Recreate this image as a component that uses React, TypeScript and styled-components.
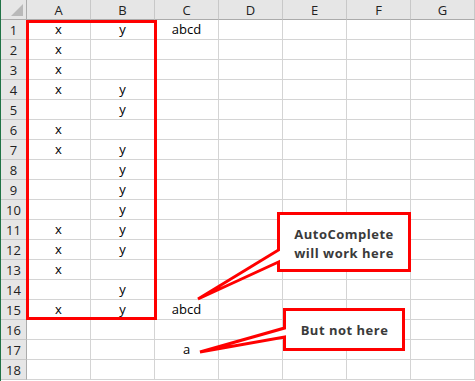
import React from "react";
import styled, { createGlobalStyle } from "styled-components";

const GlobalStyle = createGlobalStyle`
  html, body { margin: 0; padding: 0; background: #ffffff; }
  body { font-family: "Open Sans", "Liberation Sans", sans-serif; overflow: hidden; }
`;

const COLS = ["A", "B", "C", "D", "E", "F", "G"];
const ROW_COUNT = 18;

const cells: Record<string, string> = {
  A1: "x", B1: "y", C1: "abcd",
  A2: "x",
  A3: "x",
  A4: "x", B4: "y",
  B5: "y",
  A6: "x",
  A7: "x", B7: "y",
  B8: "y",
  B9: "y",
  B10: "y",
  A11: "x", B11: "y",
  A12: "x", B12: "y",
  A13: "x",
  B14: "y",
  A15: "x", B15: "y", C15: "abcd",
  C17: "a",
};

const Sheet = styled.div`
  position: relative;
  width: 475px;
  height: 381px;
  overflow: hidden;
  border-left: 1px solid #217346;
  box-sizing: border-box;
`;

const Grid = styled.div`
  display: grid;
  grid-template-columns: 26px repeat(7, 64px);
  grid-auto-rows: 20px;
`;

const Corner = styled.div`
  position: relative;
  background: #e6e6e6;
  border-right: 1px solid #ababab;
  border-bottom: 1px solid #ababab;
  box-sizing: border-box;
  &::after {
    content: "";
    position: absolute;
    right: 3px;
    bottom: 3px;
    width: 12px;
    height: 12px;
    background: #b9b9b9;
    clip-path: polygon(100% 0, 100% 100%, 0 100%);
  }
`;

const ColHead = styled.div`
  background: #e6e6e6;
  border-right: 1px solid #c8c8c8;
  border-bottom: 1px solid #ababab;
  box-sizing: border-box;
  display: flex;
  align-items: center;
  justify-content: center;
  font-size: 13px;
  color: #222222;
`;

const RowHead = styled.div`
  background: #e6e6e6;
  border-right: 1px solid #ababab;
  border-bottom: 1px solid #c8c8c8;
  box-sizing: border-box;
  display: flex;
  align-items: center;
  justify-content: center;
  font-size: 13px;
  color: #222222;
`;

const Cell = styled.div`
  border-right: 1px solid #d4d4d4;
  border-bottom: 1px solid #d4d4d4;
  box-sizing: border-box;
  display: flex;
  align-items: center;
  justify-content: center;
  font-size: 13px;
  color: #000000;
  padding-bottom: 1px;
`;

const Highlight = styled.div`
  position: absolute;
  left: 25px;
  top: 20px;
  width: 131px;
  height: 300px;
  border: 3px solid #ff0000;
  box-sizing: border-box;
  pointer-events: none;
`;

const Callouts = styled.svg`
  position: absolute;
  left: -1px;
  top: 0;
  pointer-events: none;
`;

const Label = styled.div<{ $x: number; $y: number; $w: number; $h: number }>`
  position: absolute;
  left: ${(p) => p.$x - 1}px;
  top: ${(p) => p.$y}px;
  width: ${(p) => p.$w}px;
  height: ${(p) => p.$h}px;
  display: flex;
  align-items: center;
  justify-content: center;
  text-align: center;
  font-family: "Open Sans", "Liberation Sans", sans-serif;
  font-weight: 700;
  font-size: 13px;
  line-height: 19px;
  letter-spacing: 0.5px;
  color: #3a3a3a;
`;

export default function App() {
  const rows = Array.from({ length: ROW_COUNT }, (_, i) => i + 1);
  return (
    <>
      <GlobalStyle />
      <Sheet>
        <Grid>
          <Corner />
          {COLS.map((c) => (
            <ColHead key={c}>{c}</ColHead>
          ))}
          {rows.map((r) => (
            <React.Fragment key={r}>
              <RowHead>{r}</RowHead>
              {COLS.map((c) => (
                <Cell key={c + r}>{cells[c + r] ?? ""}</Cell>
              ))}
            </React.Fragment>
          ))}
        </Grid>
        <Highlight />
        <Callouts width={475} height={381} viewBox="0 0 475 381">
          <path
            d="M278.5,213.5 H409.5 V270.5 H278.5 V262 L198,299 L278.5,250 Z"
            fill="#ffffff"
            stroke="#ff0000"
            strokeWidth={3}
          />
          <path
            d="M284.5,309.5 H403.5 V349.5 H284.5 V337 L200,352 L284.5,328 Z"
            fill="#ffffff"
            stroke="#ff0000"
            strokeWidth={3}
          />
        </Callouts>
        <Label $x={280} $y={218} $w={128} $h={52}>
          AutoComplete
          <br />
          will work here
        </Label>
        <Label $x={286} $y={312} $w={117} $h={37}>
          But not here
        </Label>
      </Sheet>
    </>
  );
}
